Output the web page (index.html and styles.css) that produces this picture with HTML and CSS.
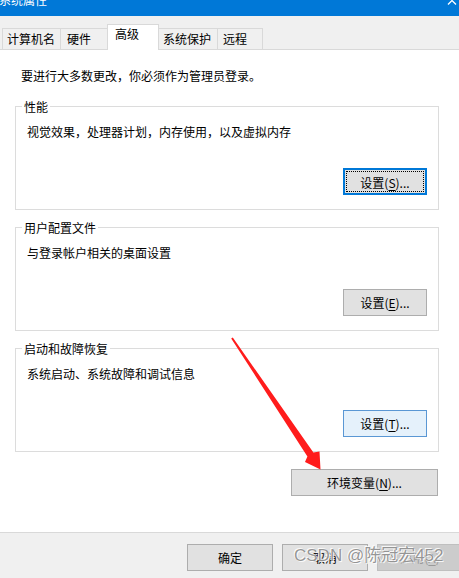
FILE: index.html
```html
<!DOCTYPE html>
<html lang="zh-CN">
<head>
<meta charset="utf-8">
<title>系统属性</title>
<link rel="stylesheet" href="styles.css">
</head>
<body>
<div class="window">
  <div class="titlebar">
    <span class="title">系统属性</span>
    <svg class="chev" width="10" height="6" viewBox="0 0 10 6"><polyline points="1,5.5 5,1.5 9,5.5" fill="none" stroke="#fff" stroke-width="1.3"/></svg>
  </div>
  <div class="tabstrip">
    <div class="tab t1">计算机名</div>
    <div class="tab t2">硬件</div>
    <div class="tab active t3">高级</div>
    <div class="tab t4">系统保护</div>
    <div class="tab t5">远程</div>
  </div>
  <div class="page">
    <p class="notice">要进行大多数更改，你必须作为管理员登录。</p>
    <div class="group">
      <span class="legend">性能</span>
      <p class="desc">视觉效果，处理器计划，内存使用，以及虚拟内存</p>
      <button class="btn gbtn default">设置(<u>S</u>)...</button>
    </div>
    <div class="group">
      <span class="legend">用户配置文件</span>
      <p class="desc">与登录帐户相关的桌面设置</p>
      <button class="btn gbtn">设置(<u>E</u>)...</button>
    </div>
    <div class="group">
      <span class="legend">启动和故障恢复</span>
      <p class="desc">系统启动、系统故障和调试信息</p>
      <button class="btn gbtn hover">设置(<u>T</u>)...</button>
    </div>
    <button class="btn env">环境变量(<u>N</u>)...</button>
  </div>
  <div class="footer">
    <button class="btn dlg">确定</button>
    <button class="btn dlg">取消</button>
    <button class="btn dlg disabled">应用(<u>A</u>)</button>
  </div>
  <svg class="arrow" width="459" height="578" viewBox="0 0 459 578">
    <polygon points="231.2,338.4 307.4,456.5 305,462 320.5,469.5 319.5,451.5 313.4,452.5 232.8,337.6" fill="#ff1c1c"/>
  </svg>
  <div class="watermark">CSDN @陈冠宏452</div>
</div>
</body>
</html>
```
FILE: styles.css
```css
html, body {
  margin: 0;
  padding: 0;
  background: #ffffff;
}

.window {
  position: relative;
  width: 459px;
  height: 578px;
  overflow: hidden;
  font-family: "Noto Sans CJK SC", "Noto Sans", sans-serif;
  font-size: 12px;
  color: #000;
  background: #f0f0f0;
}

.titlebar {
  height: 16px;
  background: #0078d7;
  display: flex;
  justify-content: space-between;
  align-items: flex-start;
  overflow: hidden;
}

.title {
  color: #fff;
  line-height: 16px;
  margin-top: -8px;
  margin-left: -1px;
}

.chev {
  margin-right: 2px;
  margin-top: -1px;
}

.tabstrip {
  height: 34px;
  box-sizing: border-box;
  border-bottom: 1px solid #d9d9d9;
  display: flex;
  align-items: flex-end;
  padding-left: 2px;
}

.tab {
  height: 21px;
  box-sizing: border-box;
  border-top: 1px solid #d9d9d9;
  border-left: 1px solid #d9d9d9;
  line-height: 19px;
  white-space: nowrap;
  background: #f0f0f0;
}

.tab.active {
  height: 26px;
  margin-bottom: -1px;
  background: #fff;
  border-right: 1px solid #d9d9d9;
  line-height: 18px;
  position: relative;
}

.tab.active + .tab {
  border-left: none;
}

.t1 { width: 58px; padding-left: 4px; }
.t2 { width: 47px; padding-left: 6px; }
.t3 { width: 52px; padding-left: 7px; }
.t4 { width: 58px; padding-left: 4px; }
.t5 { width: 46px; padding-left: 5px; border-right: 1px solid #d9d9d9; }

.page {
  height: 483px;
  box-sizing: border-box;
  background: #fff;
  border-bottom: 1px solid #d9d9d9;
  padding-top: 18px;
}

.notice {
  margin: 0 0 22px 21px;
  line-height: 16px;
}

.group {
  position: relative;
  height: 104px;
  box-sizing: border-box;
  margin: 0 20px 17px 15px;
  border: 1px solid #dcdcdc;
  padding: 17px 11px 14px 11px;
  display: flex;
  flex-direction: column;
}

.legend {
  position: absolute;
  top: -8px;
  left: 6px;
  padding: 0 2px;
  background: #fff;
  line-height: 16px;
}

.desc {
  margin: 0;
  line-height: 16px;
}

.btn {
  font-family: inherit;
  font-size: 12px;
  color: #000;
  background: #e1e1e1;
  border: 1px solid #adadad;
  padding: 0;
  height: 27px;
  box-sizing: border-box;
  line-height: 25px;
  text-align: center;
  border-radius: 0;
}

.btn u {
  text-underline-offset: 2px;
}

.gbtn {
  width: 84px;
  margin-top: auto;
  align-self: flex-end;
}

.gbtn.default {
  border: 2px solid #0078d7;
  outline: 1px dotted #000;
  outline-offset: -4px;
}

.gbtn.hover {
  background: #e5f1fb;
  border-color: #5a97d4;
}

.env {
  display: block;
  width: 147px;
  margin: 0 21px 0 auto;
}

.footer {
  height: 45px;
  box-sizing: border-box;
  padding: 11px 0 0 187px;
  display: flex;
  gap: 9px;
}

.dlg {
  width: 86px;
  flex: none;
}

.dlg.disabled {
  background: #cccccc;
  border-color: #bfbfbf;
  color: #9a9a9a;
}

.arrow {
  position: absolute;
  left: 0;
  top: 0;
  pointer-events: none;
}

.watermark {
  position: absolute;
  left: 294px;
  top: 545px;
  font-family: "Liberation Sans", "Noto Sans CJK SC", sans-serif;
  font-size: 17px;
  line-height: 22px;
  color: rgba(115, 115, 115, 0.75);
  text-shadow: 0 0 1px #fff, 1px 1px 0 rgba(255,255,255,0.85), -1px -1px 0 rgba(255,255,255,0.85);
  white-space: nowrap;
  pointer-events: none;
}
```
